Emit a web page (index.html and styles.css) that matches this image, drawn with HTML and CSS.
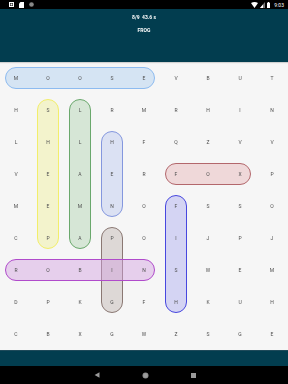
FILE: index.html
```html
<!DOCTYPE html>
<html>
<head>
<meta charset="utf-8">
<link rel="stylesheet" href="styles.css">
</head>
<body>
<div class="screen">
  <div class="statusbar">
    <div class="sb-left">
      <svg class="ic" width="5" height="5" viewBox="0 0 5 5"><rect x="0.5" y="0.5" width="4" height="4" fill="none" stroke="#fff" stroke-width="1"/><rect x="1.5" y="1.5" width="2" height="2" fill="#fff"/></svg>
      <svg class="ic" width="5" height="6" viewBox="0 0 5 6"><path d="M1.5 0H5V6H0V1.5Z" fill="#fff"/></svg>
      <svg class="ic" width="5" height="5" viewBox="0 0 5 5"><circle cx="2.5" cy="2.5" r="2.3" fill="#888"/></svg>
    </div>
    <div class="sb-right">
      <svg width="7" height="6" viewBox="0 0 7 6"><path d="M0 1Q3.5 -1 7 1L3.5 6Z" fill="#fff"/></svg>
      <svg width="5" height="6" viewBox="0 0 5 6"><path d="M5 0V6H0Z" fill="#777"/><path d="M3 2.4V6H0Z" fill="#fff"/></svg>
      <svg width="3" height="6" viewBox="0 0 3 6"><rect x="0.8" y="0" width="1.4" height="1" fill="#fff"/><rect x="0" y="0.8" width="3" height="5.2" fill="#fff"/></svg>
      <span class="time">9:03</span>
    </div>
  </div>
  <div class="header">
    <div class="hline">8/9&nbsp; 43.6 s</div>
    <div class="hline">FROG</div>
  </div>
  <div class="board">
    <div class="marks">
      <div class="mark m-moose"></div>
      <div class="mark m-sheep"></div>
      <div class="mark m-llama"></div>
      <div class="mark m-hen"></div>
      <div class="mark m-fox"></div>
      <div class="mark m-pig"></div>
      <div class="mark m-fish"></div>
      <div class="mark m-robin"></div>
    </div>
    <div class="letters">
      <span>M</span><span>O</span><span>O</span><span>S</span><span>E</span><span>V</span><span>B</span><span>U</span><span>T</span>
      <span>H</span><span>S</span><span>L</span><span>R</span><span>M</span><span>R</span><span>H</span><span>I</span><span>N</span>
      <span>L</span><span>H</span><span>L</span><span>H</span><span>F</span><span>Q</span><span>Z</span><span>V</span><span>V</span>
      <span>V</span><span>E</span><span>A</span><span>E</span><span>R</span><span>F</span><span>O</span><span>X</span><span>P</span>
      <span>M</span><span>E</span><span>M</span><span>N</span><span>O</span><span>F</span><span>S</span><span>S</span><span>O</span>
      <span>C</span><span>P</span><span>A</span><span>P</span><span>O</span><span>I</span><span>J</span><span>P</span><span>J</span>
      <span>R</span><span>O</span><span>B</span><span>I</span><span>N</span><span>S</span><span>W</span><span>E</span><span>M</span>
      <span>D</span><span>P</span><span>K</span><span>G</span><span>F</span><span>H</span><span>K</span><span>U</span><span>H</span>
      <span>C</span><span>B</span><span>X</span><span>G</span><span>W</span><span>Z</span><span>S</span><span>G</span><span>E</span>
    </div>
  </div>
  <div class="footer"></div>
  <div class="navbar">
    <svg width="6" height="6" viewBox="0 0 6 6"><path d="M5.5 0.3V5.7L0.6 3Z" fill="#9a9a9a"/></svg>
    <svg width="7" height="7" viewBox="0 0 7 7"><circle cx="3.5" cy="3.5" r="3" fill="#8a8a8a"/><circle cx="3.5" cy="3.5" r="2.2" fill="#9c9c9c"/></svg>
    <svg width="5" height="5" viewBox="0 0 5 5"><rect x="0" y="0" width="5" height="5" fill="#9a9a9a"/></svg>
  </div>
</div>
</body>
</html>
```
FILE: styles.css
```css
* { box-sizing: border-box; }
html, body { margin: 0; padding: 0; }
body { background: #000; font-family: Roboto, "Liberation Sans", sans-serif; -webkit-font-smoothing: antialiased; }
.screen { width: 288px; height: 384px; display: flex; flex-direction: column; overflow: hidden; }

.statusbar { height: 9px; background: #000; display: flex; justify-content: space-between; align-items: center; padding: 0 4px 0 9px; }
.sb-left { display: flex; align-items: center; gap: 5px; }
.sb-right { display: flex; align-items: center; gap: 2px; }
.time { color: #fff; font-size: 5px; margin-left: 2px; line-height: 6px; }

.header { height: 53px; background: #023d4f; display: flex; flex-direction: column; align-items: center; padding-top: 4px; gap: 5px; box-shadow: 0 1px 1px rgba(0,0,0,0.15); position: relative; z-index: 1; }
.hline { color: #fff; font-size: 5px; font-weight: 700; line-height: 8px; }

.board { height: 288px; background: #f6f6f6; display: grid; }
.marks, .letters { grid-area: 1 / 1; display: grid; grid-template-columns: repeat(9, 32px); grid-template-rows: repeat(9, 32px); }
.letters { will-change: transform; opacity: 0.999; }
.letters span { display: flex; align-items: center; justify-content: center; font-size: 5px; color: #505050; }

.mark { margin: 5px; border-radius: 11px; border: 1px solid; }
.m-moose { grid-area: 1 / 1 / 2 / 6; background: rgba(160,200,240,0.38); border-color: #8dbbf0; }
.m-sheep { grid-area: 2 / 2 / 7 / 3; background: rgba(240,240,170,0.55); border-color: #f2ee6a; }
.m-llama { grid-area: 2 / 3 / 7 / 4; background: rgba(175,210,175,0.45); border-color: #6aa86c; }
.m-hen { grid-area: 3 / 4 / 6 / 5; background: rgba(180,195,240,0.4); border-color: #8497de; }
.m-fox { grid-area: 4 / 6 / 5 / 9; background: rgba(230,180,182,0.45); border-color: #b3676c; }
.m-pig { grid-area: 6 / 4 / 9 / 5; background: rgba(190,180,175,0.45); border-color: #8a7873; }
.m-fish { grid-area: 5 / 6 / 9 / 7; background: rgba(170,170,240,0.45); border-color: #4747df; }
.m-robin { grid-area: 7 / 1 / 8 / 6; background: rgba(210,160,225,0.45); border-color: #b04bcb; }

.footer { height: 16px; background: #023d4f; border-top: 1px solid #1f4a5a; }
.navbar { flex: 1; background: #000; display: flex; align-items: center; justify-content: center; gap: 42px; padding-left: 2px; }
```
